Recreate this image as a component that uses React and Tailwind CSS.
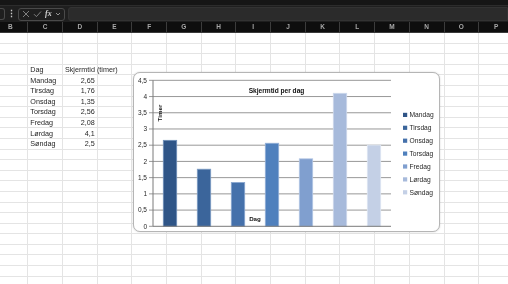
import React from "react";

const cols = ["B", "C", "D", "E", "F", "G", "H", "I", "J", "K", "L", "M", "N", "O", "P"];

const days = [
    { day: "Mandag", hours: 2.65, label: "2,65", fill: "#2f5587", edge: "#6f8fb8" },
    { day: "Tirsdag", hours: 1.76, label: "1,76", fill: "#3b659b", edge: "#7d9cc4" },
    { day: "Onsdag", hours: 1.35, label: "1,35", fill: "#4571ab", edge: "#88a6cf" },
    { day: "Torsdag", hours: 2.56, label: "2,56", fill: "#4f80bd", edge: "#93b0d8" },
    { day: "Fredag", hours: 2.08, label: "2,08", fill: "#809fcf", edge: "#b3c6e4" },
    { day: "Lørdag", hours: 4.1, label: "4,1", fill: "#a7badb", edge: "#ccd8ec" },
    { day: "Søndag", hours: 2.5, label: "2,5", fill: "#c4d0e6", edge: "#dde5f2" },
];

const ticks = ["0", "0,5", "1", "1,5", "2", "2,5", "3", "3,5", "4", "4,5"];

// chart geometry (inside the chart frame)
const baseY = 154.3;
const unit = 32.44;
const axisX = 20;
const plotRight = 258;
const yOf = (v) => baseY - v * unit;

function FormulaBar() {
    return (
        <div className="h-[16px] bg-[#1f1f1f] flex items-center gap-[2px]">
            <div className="w-[5px] h-[12px] rounded-r-[3px] border border-l-0 border-[#4a4a4a]" />
            <span className="w-[8px] text-center text-[9px] leading-none text-[#c8c8c8] font-bold">⋮</span>
            <div className="ml-[1px] w-[47px] h-[13px] rounded-[3px] border border-[#4a4a4a] flex items-center gap-[3px] px-[3px]">
                <svg width="8" height="8" viewBox="0 0 8 8" className="shrink-0">
                    <path d="M1 1 L7 7 M7 1 L1 7" stroke="#8a8a8a" strokeWidth="0.9" />
                </svg>
                <svg width="9" height="8" viewBox="0 0 9 8" className="shrink-0">
                    <path d="M1 4.2 L3.4 6.6 L8 1.5" stroke="#8a8a8a" strokeWidth="0.9" fill="none" />
                </svg>
                <span className="text-[8px] leading-none italic font-bold text-[#d0d0d0] font-['Liberation_Serif',serif]">fx</span>
                <svg width="6" height="6" viewBox="0 0 6 6" className="shrink-0">
                    <path d="M1 2 L3 4 L5 2" stroke="#a0a0a0" strokeWidth="0.9" fill="none" />
                </svg>
            </div>
            <div className="ml-[1px] flex-1 h-[14px] rounded-l-[3px] bg-[#2b2b2b] border border-[#333]" />
        </div>
    );
}

function ColumnHeaders() {
    return (
        <div className="h-[11px] bg-[#0e0e0e] overflow-hidden border-b border-[#3a3a3a]">
            <div className="flex -ml-[6.4px] h-full">
                {cols.map((c) => (
                    <div
                        key={c}
                        className="w-[34.7px] shrink-0 h-full border-r border-[#3c3c3c] flex items-center justify-center text-[6.5px] font-bold text-[#a8a8a8]"
                    >
                        {c}
                    </div>
                ))}
            </div>
        </div>
    );
}

function cellText(row, col) {
    const idx = row - 3;
    if (idx < 0 || idx > days.length) return null;
    if (idx === 0) {
        if (col === 1) return <span className="pl-[2px]">Dag</span>;
        if (col === 2) return <span className="pl-[2px]">Skjermtid (timer)</span>;
        return null;
    }
    const d = days[idx - 1];
    if (col === 1) return <span className="pl-[2px]">{d.day}</span>;
    if (col === 2) return <span className="ml-auto pr-[2px]">{d.label}</span>;
    return null;
}

function Chart() {
    return (
        <div className="absolute left-[132.7px] top-[39px] w-[307px] h-[160px] rounded-[7px] border border-[#b5b5b5] bg-white shadow-[0_0_2px_rgba(0,0,0,0.18)]">
            <svg width="307" height="160" viewBox="0 0 307 160" className="absolute -left-px -top-px font-['Liberation_Sans',sans-serif]">
                {ticks.map((t, i) => {
                    const y = yOf(i * 0.5);
                    return (
                        <g key={t}>
                            {i > 0 && <line x1={axisX} x2={plotRight} y1={y} y2={y} stroke="#8c8c8c" strokeWidth="0.9" />}
                            <line x1={axisX - 4} x2={axisX} y1={y} y2={y} stroke="#8c8c8c" strokeWidth="0.9" />
                            <text x={axisX - 6} y={y + 2.2} fontSize="6.5" textAnchor="end" fill="#262626">
                                {t}
                            </text>
                        </g>
                    );
                })}
                {days.map((d, i) => {
                    const cx = 37 + 34 * i;
                    const top = yOf(d.hours);
                    return (
                        <rect
                            key={d.day}
                            x={cx - 6.7}
                            y={top}
                            width={13.4}
                            height={baseY - top}
                            fill={d.fill}
                            stroke={d.edge}
                            strokeWidth="0.8"
                        />
                    );
                })}
                <line x1={axisX} x2={plotRight} y1={baseY} y2={baseY} stroke="#7a7a7a" strokeWidth="1" />
                <line x1={axisX} x2={axisX} y1={yOf(4.5)} y2={baseY} stroke="#7a7a7a" strokeWidth="1" />

                <text x="143.5" y="20.5" fontSize="6.6" fontWeight="bold" textAnchor="middle" fill="#111">
                    Skjermtid per dag
                </text>
                <text x="0" y="0" fontSize="6.2" fontWeight="bold" textAnchor="middle" fill="#111" transform="translate(28.5 41) rotate(-90)">
                    Timer
                </text>
                <text x="122" y="148.5" fontSize="6.2" fontWeight="bold" textAnchor="middle" fill="#111">
                    Dag
                </text>

                {days.map((d, i) => {
                    const y = 43 + 12.9 * i;
                    return (
                        <g key={d.day}>
                            <rect x="270" y={y - 2.2} width="4.2" height="4.2" fill={d.fill} />
                            <text x="276.5" y={y + 2.3} fontSize="6.7" fill="#262626">
                                {d.day}
                            </text>
                        </g>
                    );
                })}
            </svg>
        </div>
    );
}

export default function App() {
    const rows = Array.from({ length: 24 }, (_, i) => i);
    return (
        <div className="w-[508px] h-[284px] overflow-hidden bg-white flex flex-col antialiased [will-change:transform] font-['Liberation_Sans',sans-serif]">
            <div className="h-[6px] bg-[#161616] border-b border-[#2c2c2c]" />
            <FormulaBar />
            <ColumnHeaders />
            <div className="relative flex-1 overflow-hidden">
                {rows.map((r) => (
                    <div key={r} className="flex -ml-[6.4px] h-[10.6px]">
                        {cols.map((c, ci) => (
                            <div
                                key={c}
                                className="w-[34.7px] shrink-0 h-full border-r border-b border-[#e4e4e4] flex items-center whitespace-nowrap text-[7.2px] leading-none text-[#262626]"
                            >
                                {cellText(r, ci)}
                            </div>
                        ))}
                    </div>
                ))}
                <Chart />
            </div>
        </div>
    );
}
